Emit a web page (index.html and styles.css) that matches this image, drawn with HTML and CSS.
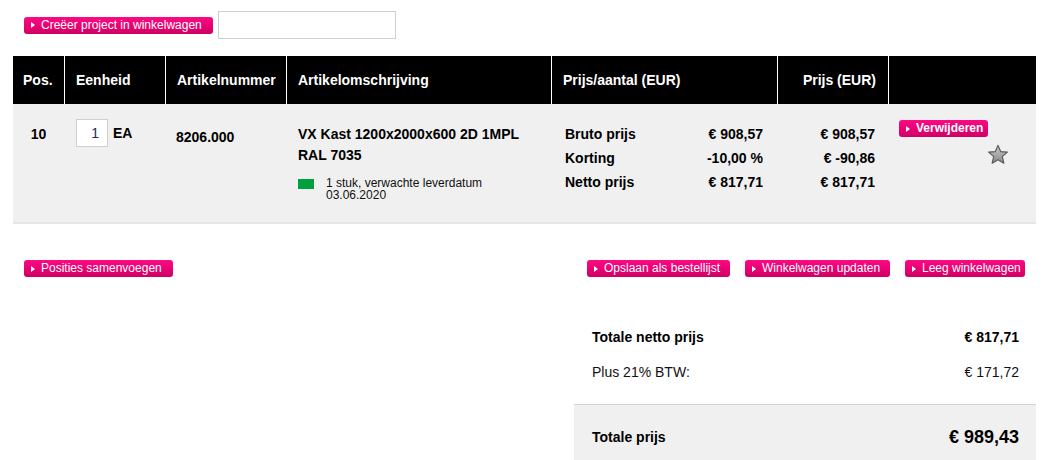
FILE: index.html
```html
<!DOCTYPE html>
<html lang="nl">
<head>
<meta charset="utf-8">
<title>Winkelwagen</title>
<link rel="stylesheet" href="styles.css">
</head>
<body>
<div class="page">
  <div class="topbar">
    <a class="btn btn-project">Creëer project in winkelwagen</a>
    <input class="project-input" type="text">
  </div>

  <div class="cart-wrap">
    <table class="cart">
      <colgroup>
        <col class="w-pos"><col class="w-unit"><col class="w-art"><col class="w-desc"><col class="w-pp"><col class="w-price"><col class="w-act">
      </colgroup>
      <thead>
        <tr>
          <th>Pos.</th>
          <th>Eenheid</th>
          <th>Artikelnummer</th>
          <th>Artikelomschrijving</th>
          <th>Prijs/aantal (EUR)</th>
          <th class="right">Prijs (EUR)</th>
          <th></th>
        </tr>
      </thead>
      <tbody>
        <tr>
          <td class="td-pos">10</td>
          <td class="td-unit">
            <div class="qty"><input class="qty-input" type="text" value="1"><span>EA</span></div>
          </td>
          <td class="td-art">8206.000</td>
          <td class="td-desc">
            <div class="desc-title">VX Kast 1200x2000x600 2D 1MPL<br>RAL 7035</div>
            <div class="stock"><span class="stock-dot"></span><span>1 stuk, verwachte leverdatum<br>03.06.2020</span></div>
          </td>
          <td class="td-pp">
            <div class="price-grid">
              <span>Bruto prijs</span><span class="right">€ 908,57</span>
              <span>Korting</span><span class="right">-10,00 %</span>
              <span>Netto prijs</span><span class="right">€ 817,71</span>
            </div>
          </td>
          <td class="td-price">
            <div>€ 908,57</div>
            <div>€ -90,86</div>
            <div>€ 817,71</div>
          </td>
          <td class="td-act">
            <div class="act-box">
              <a class="btn btn-bold btn-remove">Verwijderen</a>
              <svg class="star" width="22" height="21" viewBox="0 0 24 23" aria-hidden="true">
                <defs>
                  <linearGradient id="sg" x1="0" y1="0" x2="0" y2="1">
                    <stop offset="0" stop-color="#c8c8c8"/>
                    <stop offset="1" stop-color="#8a8a8a"/>
                  </linearGradient>
                </defs>
                <polygon points="12,1.5 14.9,8.3 22.3,8.9 16.7,13.8 18.4,21 12,17.2 5.6,21 7.3,13.8 1.7,8.9 9.1,8.3" fill="url(#sg)" stroke="#5a5a5a" stroke-width="1.3" stroke-linejoin="round"/>
              </svg>
            </div>
          </td>
        </tr>
      </tbody>
    </table>
  </div>

  <div class="actions">
    <a class="btn btn-merge">Posities samenvoegen</a>
    <div class="actions-right">
      <a class="btn btn-save">Opslaan als bestellijst</a>
      <a class="btn btn-update">Winkelwagen updaten</a>
      <a class="btn btn-empty">Leeg winkelwagen</a>
    </div>
  </div>

  <div class="totals">
    <div class="tot-row tot-net"><span>Totale netto prijs</span><span>€ 817,71</span></div>
    <div class="tot-row tot-vat"><span>Plus 21% BTW:</span><span>€ 171,72</span></div>
    <div class="tot-row tot-grand"><span>Totale prijs</span><span class="grand-val">€ 989,43</span></div>
  </div>
</div>
</body>
</html>
```

FILE: styles.css
```css
html, body {
  margin: 0;
  padding: 0;
  background: #fff;
}
body {
  font-family: "Liberation Sans", Arial, sans-serif;
  color: #000;
  overflow: hidden;
}
.page {
  padding: 0 26px 0 13px;
}

/* buttons */
.btn {
  display: inline-flex;
  align-items: center;
  height: 17px;
  padding: 0 8px 0 7px;
  border-radius: 3px;
  background: linear-gradient(to bottom, #fb0a84 0%, #ea0274 50%, #cf0062 100%);
  color: #fff;
  font-size: 12px;
  line-height: 17px;
  white-space: nowrap;
  cursor: pointer;
  box-sizing: border-box;
}
.btn::before {
  content: "";
  width: 0;
  height: 0;
  border-left: 4px solid #fff;
  border-top: 3.5px solid transparent;
  border-bottom: 3.5px solid transparent;
  margin-right: 6px;
}
.btn-bold {
  font-weight: bold;
}
.btn-project { width: 189px; }
.btn-merge { width: 149px; }
.btn-save { width: 143px; }
.btn-update { width: 145px; }
.btn-empty { width: 120px; }
.btn-remove { width: 89px; }

/* top bar */
.topbar {
  display: flex;
  align-items: center;
  gap: 5px;
  padding: 11px 0 0 11px;
}
.project-input {
  width: 178px;
  height: 28px;
  box-sizing: border-box;
  border: 1px solid #cfcfcf;
  margin: 0;
  padding: 0 4px;
}

/* table */
.cart-wrap {
  margin-top: 17px;
  border-bottom: 2px solid #e6e6e6;
}
.cart {
  width: 100%;
  border-collapse: separate;
  border-spacing: 0;
  table-layout: fixed;
  font-size: 14px;
}
.w-pos { width: 51px; }
.w-unit { width: 101px; }
.w-art { width: 121px; }
.w-desc { width: 265px; }
.w-pp { width: 226px; }
.w-price { width: 111px; }
.w-act { width: 148px; }

.cart th {
  background: #000;
  color: #fff;
  height: 48px;
  padding: 0 11px;
  text-align: left;
  font-weight: bold;
  font-size: 14px;
  border-left: 1px solid #fff;
  white-space: nowrap;
}
.cart th:first-child {
  border-left: 0;
  padding-left: 10px;
}
.cart th.right {
  text-align: right;
  padding-right: 12px;
}
.cart tbody tr {
  height: 118px;
}
.cart td {
  background: #f0f0f0;
  vertical-align: top;
  padding: 18px 11px 0;
  line-height: 24px;
  font-weight: bold;
}
.cart .td-pos {
  text-align: center;
  padding-left: 0;
  padding-right: 0;
}
.qty {
  display: flex;
  align-items: center;
  gap: 5px;
  margin-top: -3px;
  margin-left: 1px;
}
.qty-input {
  width: 32px;
  height: 28px;
  box-sizing: border-box;
  border: 1px solid #cfcfcf;
  margin: 0;
  padding: 0 8px 0 0;
  text-align: right;
  font-family: "Liberation Sans", Arial, sans-serif;
  font-size: 14px;
  color: #1a2a5a;
  background: #fff;
}
.cart .td-art {
  padding-top: 21px;
}
.cart .td-desc {
  padding-top: 20px;
  padding-left: 12px;
}
.desc-title {
  line-height: 21px;
}
.stock {
  display: flex;
  align-items: flex-start;
  gap: 12px;
  margin-top: 11px;
  font-size: 12px;
  font-weight: normal;
  line-height: 12px;
  color: #111;
}
.stock-dot {
  flex: none;
  width: 16px;
  height: 10px;
  margin-top: 2px;
  background: #00a03c;
}
.cart .td-pp {
  padding-left: 14px;
  padding-right: 14px;
}
.price-grid {
  display: grid;
  grid-template-columns: 1fr auto;
}
.right {
  text-align: right;
}
.cart .td-price {
  text-align: right;
  padding-right: 13px;
}
.cart .td-act {
  padding-top: 16px;
}
.act-box {
  display: flex;
  flex-direction: column;
  align-items: flex-start;
  width: 110px;
}
.star {
  align-self: flex-end;
  margin-top: 7px;
}

/* actions */
.actions {
  display: flex;
  justify-content: space-between;
  align-items: center;
  margin-top: 36px;
  padding: 0 11px 0 11px;
}
.actions-right {
  display: flex;
  gap: 15px;
}

/* totals */
.totals {
  width: 462px;
  margin: 43px 0 0 auto;
  font-size: 14px;
}
.tot-row {
  display: flex;
  justify-content: space-between;
  align-items: center;
  padding: 0 17px 0 18px;
  line-height: 20px;
}
.tot-net {
  height: 34px;
  font-weight: bold;
}
.tot-vat {
  padding-top: 8px;
  padding-bottom: 22px;
  color: #111;
}
.tot-grand {
  border-top: 1px solid #d2d2d2;
  background: #f0f0f0;
  padding-top: 22px;
  padding-bottom: 13px;
  font-weight: bold;
}
.grand-val {
  font-size: 18px;
}
```
